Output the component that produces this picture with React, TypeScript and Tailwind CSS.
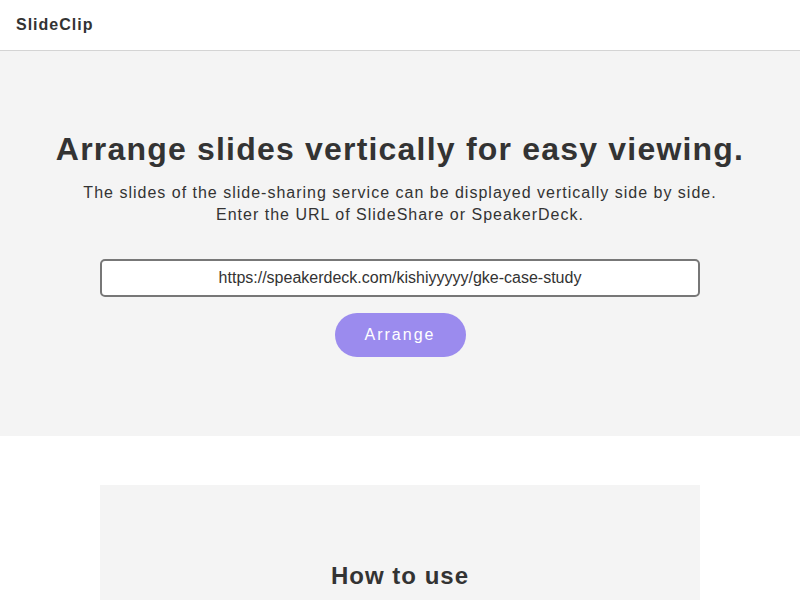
export default function App() {
  const font = { fontFamily: '"Liberation Sans", Arial, sans-serif' }
  return (
    <div className="min-h-screen bg-white text-[#333]" style={font}>
      <header className="h-[51px] border-b border-[#d4d4d4] bg-white flex items-center px-4">
        <span className="text-[16px] font-bold tracking-[1px]">SlideClip</span>
      </header>

      <section className="bg-[#f4f4f4] pt-[78px] pb-[79px] flex flex-col items-center">
        <h1 className="text-[32px] leading-[40px] font-bold tracking-[1.2px]">
          Arrange slides vertically for easy viewing.
        </h1>
        <p className="mt-[13px] text-[16px] leading-[22px] tracking-[1px] text-center">
          The slides of the slide-sharing service can be displayed vertically side by side.
          <br />
          Enter the URL of SlideShare or SpeakerDeck.
        </p>
        <input
          className="mt-[33px] w-[600px] h-[38px] rounded-[5px] border-2 border-[#777] bg-white text-center text-[16px] text-[#333] outline-none"
          defaultValue="https://speakerdeck.com/kishiyyyyy/gke-case-study"
        />
        <button className="mt-[16px] w-[131px] h-[44px] rounded-full bg-[#9b8bee] text-white text-[16px] tracking-[2px]">
          Arrange
        </button>
      </section>

      <section className="pt-[49px] flex justify-center">
        <div className="w-[600px] bg-[#f4f4f4] pt-[77px] pb-10 flex flex-col items-center">
          <h2 className="text-[24px] leading-[28px] font-bold tracking-[1px]">How to use</h2>
          <p className="mt-[6px] text-[16px] leading-[22px] tracking-[1px]">
            Enter the slide URL and click.
          </p>
        </div>
      </section>
    </div>
  )
}
